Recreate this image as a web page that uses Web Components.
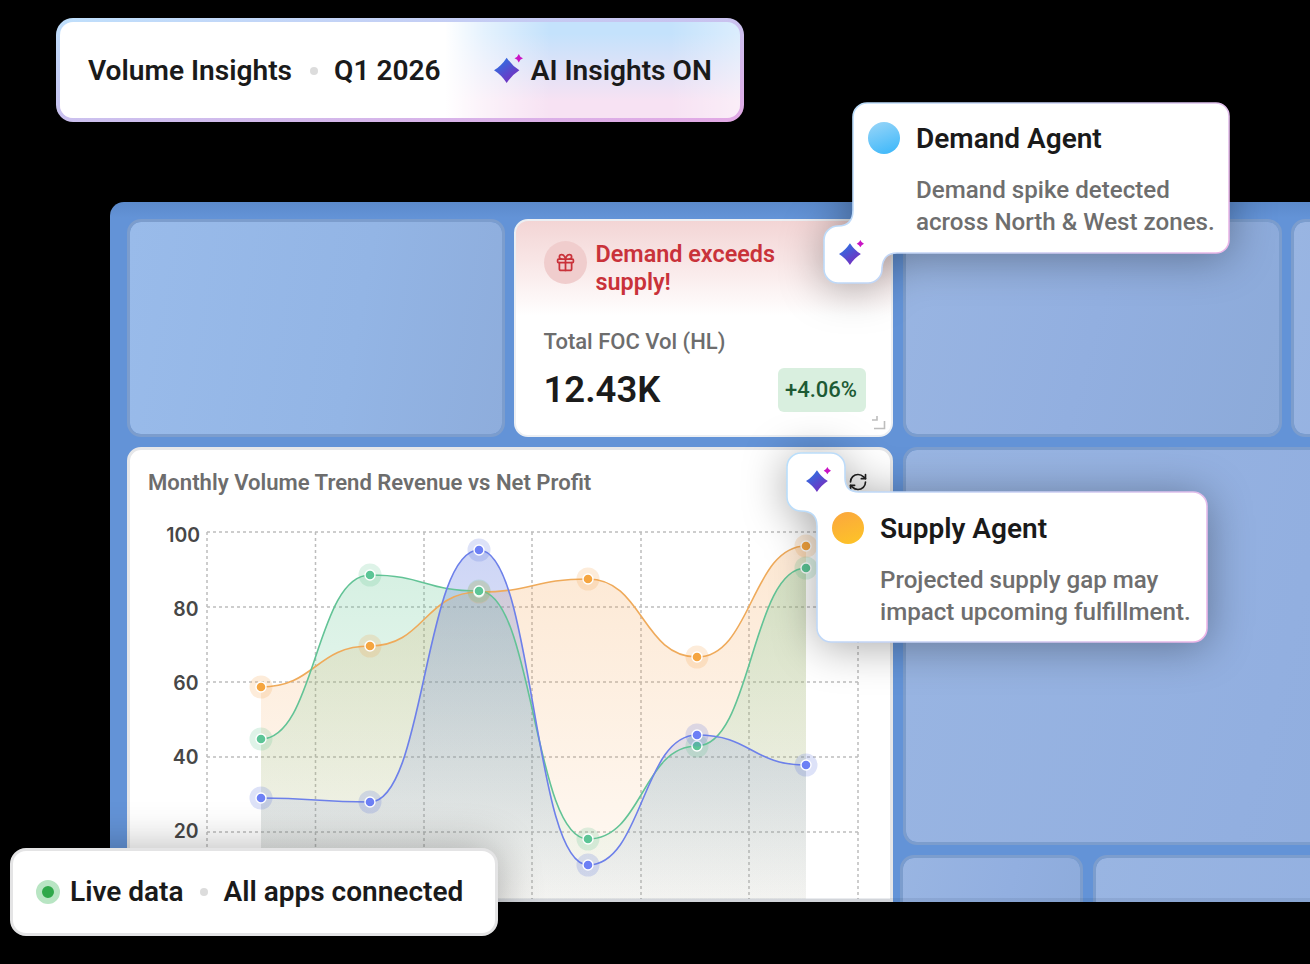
<!DOCTYPE html>
<html lang="en">
<head>
<meta charset="utf-8">
<title>Volume Insights</title>
<style>
    html, body { margin: 0; background: #000; }
    body { font-family: Roboto, "Liberation Sans", sans-serif; color: #1a1a1a; }
    #stage { position: relative; width: 1310px; height: 964px; overflow: hidden; background: #000; }
    #stage > dash-frame { margin: 202px 0 0 110px; }
</style>
</head>
<body>
<div id="stage">
    <dash-frame>
        <dash-tile tone="first"></dash-tile>
        <kpi-card slot="kpi"></kpi-card>
        <dash-tile slot="third"></dash-tile>
        <dash-tile slot="fourth"></dash-tile>
        <chart-card slot="chart"></chart-card>
        <dash-tile slot="big"></dash-tile>
        <dash-tile slot="low1"></dash-tile>
        <dash-tile slot="low2"></dash-tile>
    </dash-frame>

    <top-bar></top-bar>

    <agent-tip variant="demand">
        <span slot="name">Demand Agent</span>
        <span slot="line1">Demand spike detected</span>
        <span slot="line2">across North &amp; West zones.</span>
    </agent-tip>
    <agent-tip variant="supply">
        <span slot="name">Supply Agent</span>
        <span slot="line1">Projected supply gap may</span>
        <span slot="line2">impact upcoming fulfillment.</span>
    </agent-tip>

    <live-pill></live-pill>
</div>

<script>
const SPARK = (id, size) => `
<svg width="${size}" height="${size}" viewBox="0 0 24 24" style="display:block;flex:none">
    <defs>
        <linearGradient id="${id}" x1="0.1" y1="0.1" x2="0.8" y2="1">
            <stop offset="0" stop-color="#2a74e4"/>
            <stop offset="1" stop-color="#7d28bc"/>
        </linearGradient>
    </defs>
    <path fill="url(#${id})" d="M10.5 3Q14.8 9.6 21 13.5Q14.8 17.4 10.5 24Q6.2 17.4 0 13.5Q6.2 9.6 10.5 3Z"/>
    <path fill="#c914c4" d="M20.5 0Q21.4 2.6 24 3.5Q21.4 4.4 20.5 7Q19.6 4.4 17 3.5Q19.6 2.6 20.5 0Z"/>
</svg>`;

class DashFrame extends HTMLElement {
    constructor() {
        super();
        this.attachShadow({ mode: 'open' });
        this.shadowRoot.innerHTML = `
<style>
    :host {
        display: block;
        box-sizing: border-box;
        position: relative;
        width: 1400px;
        height: 700px;
        overflow: hidden;
        border-radius: 14px 0 0 0;
        background: linear-gradient(180deg, #5b8acb 0, #6393d7 16px, #6393d7 100%);
    }
    :host::after {
        content: "";
        position: absolute;
        left: 0; right: 0; bottom: 0;
        height: 4px;
        background: rgba(40, 60, 90, .1);
    }
    .grid {
        display: grid;
        grid-template-columns: 378px 380px 379px 379px;
        grid-template-rows: 218px 398px 200px;
        column-gap: 9px;
        row-gap: 10px;
        padding: 17px 0 0 17px;
    }
    .kpi { margin-right: 1px; }
    .chart { grid-column: 1 / 3; grid-row: 2 / 4; height: 455px; margin-right: 1px; }
    .big { grid-column: 3 / 5; grid-row: 2; }
    .low { grid-column: 3 / 5; grid-row: 3; display: flex; gap: 10px; margin-left: -3px; }
    .low ::slotted([slot="low1"]) { width: 183px; flex: none; }
    .low ::slotted([slot="low2"]) { flex: 1; }
</style>
<div class="grid">
    <slot></slot>
    <div class="kpi"><slot name="kpi"></slot></div>
    <slot name="third"></slot>
    <slot name="fourth"></slot>
    <div class="chart"><slot name="chart"></slot></div>
    <div class="big"><slot name="big"></slot></div>
    <div class="low"><slot name="low1"></slot><slot name="low2"></slot></div>
</div>`;
    }
}

class DashTile extends HTMLElement {
    constructor() {
        super();
        this.attachShadow({ mode: 'open' });
        this.shadowRoot.innerHTML = `
<style>
    :host {
        display: block;
        box-sizing: border-box;
        height: 100%;
        border: 3px solid #7c9dcd;
        border-radius: 14px;
        background: linear-gradient(105deg, #99b5e2 0, #92afe0 50%, #8caad9 100%) padding-box;
    }
    :host([tone="first"]) {
        background: linear-gradient(100deg, #99bbea 0, #93b5e5 60%, #8eaddc 100%) padding-box;
    }
</style>`;
    }
}

class TopBar extends HTMLElement {
    constructor() {
        super();
        this.attachShadow({ mode: 'open' });
        this.shadowRoot.innerHTML = `
<style>
    :host {
        position: absolute;
        left: 56px;
        top: 18px;
        box-sizing: border-box;
        width: 688px;
        height: 104px;
        display: flex;
        align-items: center;
        padding: 2px 0 0 28px;
        border: 4px solid transparent;
        border-radius: 17px;
        font: 600 28.1px/34px Roboto, sans-serif;
        color: #1a1a1a;
        white-space: nowrap;
        background:
            linear-gradient(270deg, rgba(255,255,255,.4) 0, rgba(255,255,255,0) 70px) padding-box,
            linear-gradient(90deg, #fff 385px, rgba(255,255,255,.55) 425px, rgba(255,255,255,0) 490px) padding-box,
            linear-gradient(180deg, #c4e2fc 12%, #f7e2f3 82%) padding-box,
            linear-gradient(172deg, #bfe0fc 0, #c8c4f0 45%, #e2a8e4 100%) border-box;
    }
    .sep { width: 8px; height: 8px; border-radius: 50%; background: #dcdcdc; margin: 0 16px 0 18px; }
    .ai { display: flex; align-items: center; margin-left: 53px; gap: 8px; }
    .ai svg { margin-top: -6px; }
</style>
<span>Volume Insights</span>
<i class="sep"></i>
<span>Q1 2026</span>
<div class="ai">${SPARK('spark-top', 29)}<span>AI Insights ON</span></div>`;
    }
}

class KpiCard extends HTMLElement {
    constructor() {
        super();
        this.attachShadow({ mode: 'open' });
        this.shadowRoot.innerHTML = `
<style>
    :host {
        display: block;
        box-sizing: border-box;
        position: relative;
        height: 218px;
        border: 2px solid #eceff3;
        border-radius: 14px;
        padding: 20px 25px 0 27.5px;
        background: linear-gradient(180deg, #f3d5d5 0, #f9e8e8 45px, #fff 95px);
    }
    .alert { display: flex; gap: 9px; }
    .gift {
        width: 43px; height: 43px; flex: none;
        border-radius: 50%; background: #f0cdcd;
        display: flex; align-items: center; justify-content: center;
    }
    .msg { font: 600 23.4px/28px Roboto, sans-serif; color: #c9323a; width: 210px; margin-top: -1px; }
    .label { font: 500 22px/28px Roboto, sans-serif; color: #6d6d6d; margin-top: 32px; }
    .row { display: flex; justify-content: space-between; align-items: center; margin-top: 12px; }
    .value { font: 600 36.5px/44px Roboto, sans-serif; color: #1b1b1b; }
    .badge {
        background: #d9efdf; color: #1d5a34; border-radius: 6px;
        font: 500 22px/44px Roboto, sans-serif; padding: 0 9px 0 7px;
    }
    .resize { position: absolute; right: 5px; bottom: 5px; }
</style>
<div class="alert">
    <div class="gift">
        <svg width="21" height="21" viewBox="0 0 24 24" fill="none" stroke="#c9323a" stroke-width="2" stroke-linecap="round" stroke-linejoin="round">
            <rect x="3" y="8" width="18" height="4" rx="1"/>
            <path d="M12 8v13"/>
            <path d="M19 12v7a2 2 0 0 1-2 2H7a2 2 0 0 1-2-2v-7"/>
            <path d="M7.5 8a2.5 2.5 0 0 1 0-5A4.8 8 0 0 1 12 8a4.8 8 0 0 1 4.5-5 2.5 2.5 0 0 1 0 5"/>
        </svg>
    </div>
    <div class="msg">Demand exceeds supply!</div>
</div>
<div class="label">Total FOC Vol (HL)</div>
<div class="row">
    <div class="value">12.43K</div>
    <div class="badge">+4.06%</div>
</div>
<svg class="resize" width="15" height="15" viewBox="0 0 15 15" fill="none" stroke="#bdbdbd" stroke-width="1.6">
    <path d="M1 5H6V1"/>
    <path d="M3 13.5H13.5V6"/>
</svg>`;
    }
}

// flat tangent at every point, control points half way between them
function bumpPath(pts) {
    let d = `M${pts[0][0]} ${pts[0][1]}`;
    for (let i = 1; i < pts.length; i++) {
        const [x0, y0] = pts[i - 1];
        const [x1, y1] = pts[i];
        const mx = (x0 + x1) / 2;
        d += `C${mx} ${y0} ${mx} ${y1} ${x1} ${y1}`;
    }
    return d;
}

class ChartCard extends HTMLElement {
    constructor() {
        super();
        this.attachShadow({ mode: 'open' });
        const xs = [261, 370, 479, 588, 697, 806];
        const series = [
            { id: 'orange', line: '#efaa5a', dot: '#f5a540', top: .24, low: .05, rgb: '245,158,70', ys: [687, 646, 592, 579, 657, 546] },
            { id: 'green', line: '#62c396', dot: '#5cc596', top: .27, low: .03, rgb: '90,195,140', ys: [739, 575, 591, 839, 746, 568] },
            { id: 'blue', line: '#6d80ea', dot: '#6d80f5', top: .3, low: .03, rgb: '85,112,222', ys: [798, 802, 550, 865, 735, 765] },
        ];
        let defs = '', areas = '', lines = '', dots = '';
        for (const c of series) {
            const pts = xs.map((x, i) => [x, c.ys[i]]);
            const d = bumpPath(pts);
            defs += `<linearGradient id="fill-${c.id}" gradientUnits="userSpaceOnUse" x1="0" y1="540" x2="0" y2="906">
                <stop offset="0" stop-color="rgb(${c.rgb})" stop-opacity="${c.top}"/>
                <stop offset="1" stop-color="rgb(${c.rgb})" stop-opacity="${c.low}"/>
            </linearGradient>`;
            areas += `<path d="${d}L806 906L261 906Z" fill="url(#fill-${c.id})"/>`;
            lines += `<path d="${d}" fill="none" stroke="${c.line}" stroke-width="1.6"/>`;
            for (const [x, y] of pts) {
                dots += `<circle cx="${x}" cy="${y}" r="11.5" fill="rgb(${c.rgb})" fill-opacity=".2"/>
                    <circle cx="${x}" cy="${y}" r="5" fill="${c.dot}" stroke="#fff" stroke-width="1.4"/>`;
            }
        }
        let grid = '', labels = '';
        [532, 607, 682, 757, 832].forEach((y, i) => {
            grid += `<path d="M207 ${y}H858"/>`;
            labels += `<text x="${i ? 198.5 : 200}" y="${542 + i * 74}" text-anchor="end">${100 - i * 20}</text>`;
        });
        [207, 315.5, 424, 532, 641, 749, 858].forEach(x => {
            grid += `<path d="M${x} 532V910"/>`;
        });
        this.shadowRoot.innerHTML = `
<style>
    :host {
        display: block;
        box-sizing: border-box;
        height: 100%;
        border: 3px solid #e6e7e9;
        border-radius: 14px 14px 0 0;
        background: #fff;
        overflow: hidden;
    }
    .head {
        display: flex; justify-content: space-between; align-items: center;
        height: 60px; padding: 4px 22px 0 18px; box-sizing: border-box;
        font: 600 22.1px/28px Roboto, sans-serif; color: #6d6d6d;
    }
    svg.plot { display: block; }
    .ticks text { font: 600 19.4px Inter, sans-serif; fill: #474747; }
    .grid { stroke: #bdbdbd; stroke-width: 1.5; stroke-dasharray: 3 3; fill: none; }
</style>
<div class="head">
    <span>Monthly Volume Trend Revenue vs Net Profit</span>
    <svg width="20" height="20" viewBox="0 0 24 24" fill="none" stroke="#222" stroke-width="2" stroke-linecap="round" stroke-linejoin="round">
        <path d="M3 12a9 9 0 0 1 9-9 9.75 9.75 0 0 1 6.74 2.74L21 8"/>
        <path d="M21 3v5h-5"/>
        <path d="M21 12a9 9 0 0 1-9 9 9.75 9.75 0 0 1-6.74-2.74L3 16"/>
        <path d="M8 16H3v5"/>
    </svg>
</div>
<svg class="plot" width="760" height="410" viewBox="130 510 760 410">
    <defs>${defs}</defs>
    <g class="grid">${grid}</g>
    <g class="ticks">${labels}</g>
    ${areas}${lines}${dots}
</svg>`;
    }
}

class AgentTip extends HTMLElement {
    static shapes = {
        // outlines are in the tip's own coordinates; the chip and the bubble are one path
        demand: {
            left: 823, top: 102, width: 407, height: 182, pad: '20px 0 0 45px',
            d: 'M44 1H393A13 13 0 0 1 406 14V138A13 13 0 0 1 393 151H74Q60 151 59 166V167A14 14 0 0 1 45 181H15A14 14 0 0 1 1 167V138A14 14 0 0 1 15 124Q30 124 30 108V15A14 14 0 0 1 44 1Z',
            chip: [16, 138], dot: 'linear-gradient(160deg, #9bd6f8, #38b6fa)',
        },
        supply: {
            left: 786, top: 452, width: 422, height: 191, pad: '60px 0 0 46px',
            d: 'M15 1H45A14 14 0 0 1 59 15V26Q59 40 73 40H407A14 14 0 0 1 421 54V176A14 14 0 0 1 407 190H45A14 14 0 0 1 31 176V74Q31 59 15 59A14 14 0 0 1 1 45V15A14 14 0 0 1 15 1Z',
            chip: [20, 15], dot: 'linear-gradient(160deg, #fba63f, #fdc526)',
        },
    };

    constructor() {
        super();
        this.attachShadow({ mode: 'open' });
    }

    connectedCallback() {
        const v = this.getAttribute('variant');
        const s = AgentTip.shapes[v];
        this.shadowRoot.innerHTML = `
<style>
    :host {
        position: absolute;
        left: ${s.left}px;
        top: ${s.top}px;
        width: ${s.width}px;
        height: ${s.height}px;
        box-sizing: border-box;
        padding: ${s.pad};
        white-space: nowrap;
    }
    svg.shape { position: absolute; inset: 0; filter: drop-shadow(0 4px 22px rgba(0, 0, 0, .34)); }
    .chip { position: absolute; left: ${s.chip[0]}px; top: ${s.chip[1]}px; }
    .row, .desc { position: relative; }
    .row { display: flex; align-items: center; gap: 16px; height: 32px; }
    .dot { width: 32px; height: 32px; border-radius: 50%; background: ${s.dot}; flex: none; }
    .name { font: 600 28px/32px Roboto, sans-serif; color: #1a1a1a; padding-top: 1px; }
    .desc { margin: 20px 0 0 48px; font: 500 24.15px/32px Roboto, sans-serif; color: #6e6e6e; }
    .desc span { display: block; }
</style>
<svg class="shape" width="${s.width}" height="${s.height}" viewBox="0 0 ${s.width} ${s.height}">
    <defs>
        <linearGradient id="edge-${v}" gradientUnits="userSpaceOnUse" x1="0" y1="0" x2="${s.width}" y2="${s.height}">
            <stop offset="0" stop-color="#b9dffb"/>
            <stop offset=".55" stop-color="#c9cdf2"/>
            <stop offset="1" stop-color="#eeb4e6"/>
        </linearGradient>
    </defs>
    <path d="${s.d}" fill="#fff" stroke="url(#edge-${v})" stroke-width="1.6"/>
</svg>
<div class="chip">${SPARK('spark-' + v, 25)}</div>
<div class="row"><i class="dot"></i><span class="name"><slot name="name"></slot></span></div>
<div class="desc"><span><slot name="line1"></slot></span><span><slot name="line2"></slot></span></div>`;
    }
}

class LivePill extends HTMLElement {
    constructor() {
        super();
        this.attachShadow({ mode: 'open' });
        this.shadowRoot.innerHTML = `
<style>
    :host {
        position: absolute;
        left: 10px;
        top: 848px;
        box-sizing: border-box;
        width: 488px;
        height: 88px;
        display: flex;
        align-items: center;
        padding-left: 23px;
        background: #fff;
        border: 3px solid #e4e4e5;
        border-radius: 16px;
        box-shadow: 0 0 44px rgba(0, 0, 0, .3);
        font: 600 28px/34px Roboto, sans-serif;
        color: #1a1a1a;
        white-space: nowrap;
    }
    .live { width: 12px; height: 12px; border-radius: 50%; background: #2fa84a; border: 6px solid #b8e5c3; margin-right: 10px; flex: none; }
    .sep { width: 8px; height: 8px; border-radius: 50%; background: #dcdcdc; margin: 0 16px 0 16px; }
</style>
<i class="live"></i>
<span>Live data</span>
<i class="sep"></i>
<span>All apps connected</span>`;
    }
}

customElements.define('dash-frame', DashFrame);
customElements.define('dash-tile', DashTile);
customElements.define('top-bar', TopBar);
customElements.define('kpi-card', KpiCard);
customElements.define('chart-card', ChartCard);
customElements.define('agent-tip', AgentTip);
customElements.define('live-pill', LivePill);
</script>
</body>
</html>
